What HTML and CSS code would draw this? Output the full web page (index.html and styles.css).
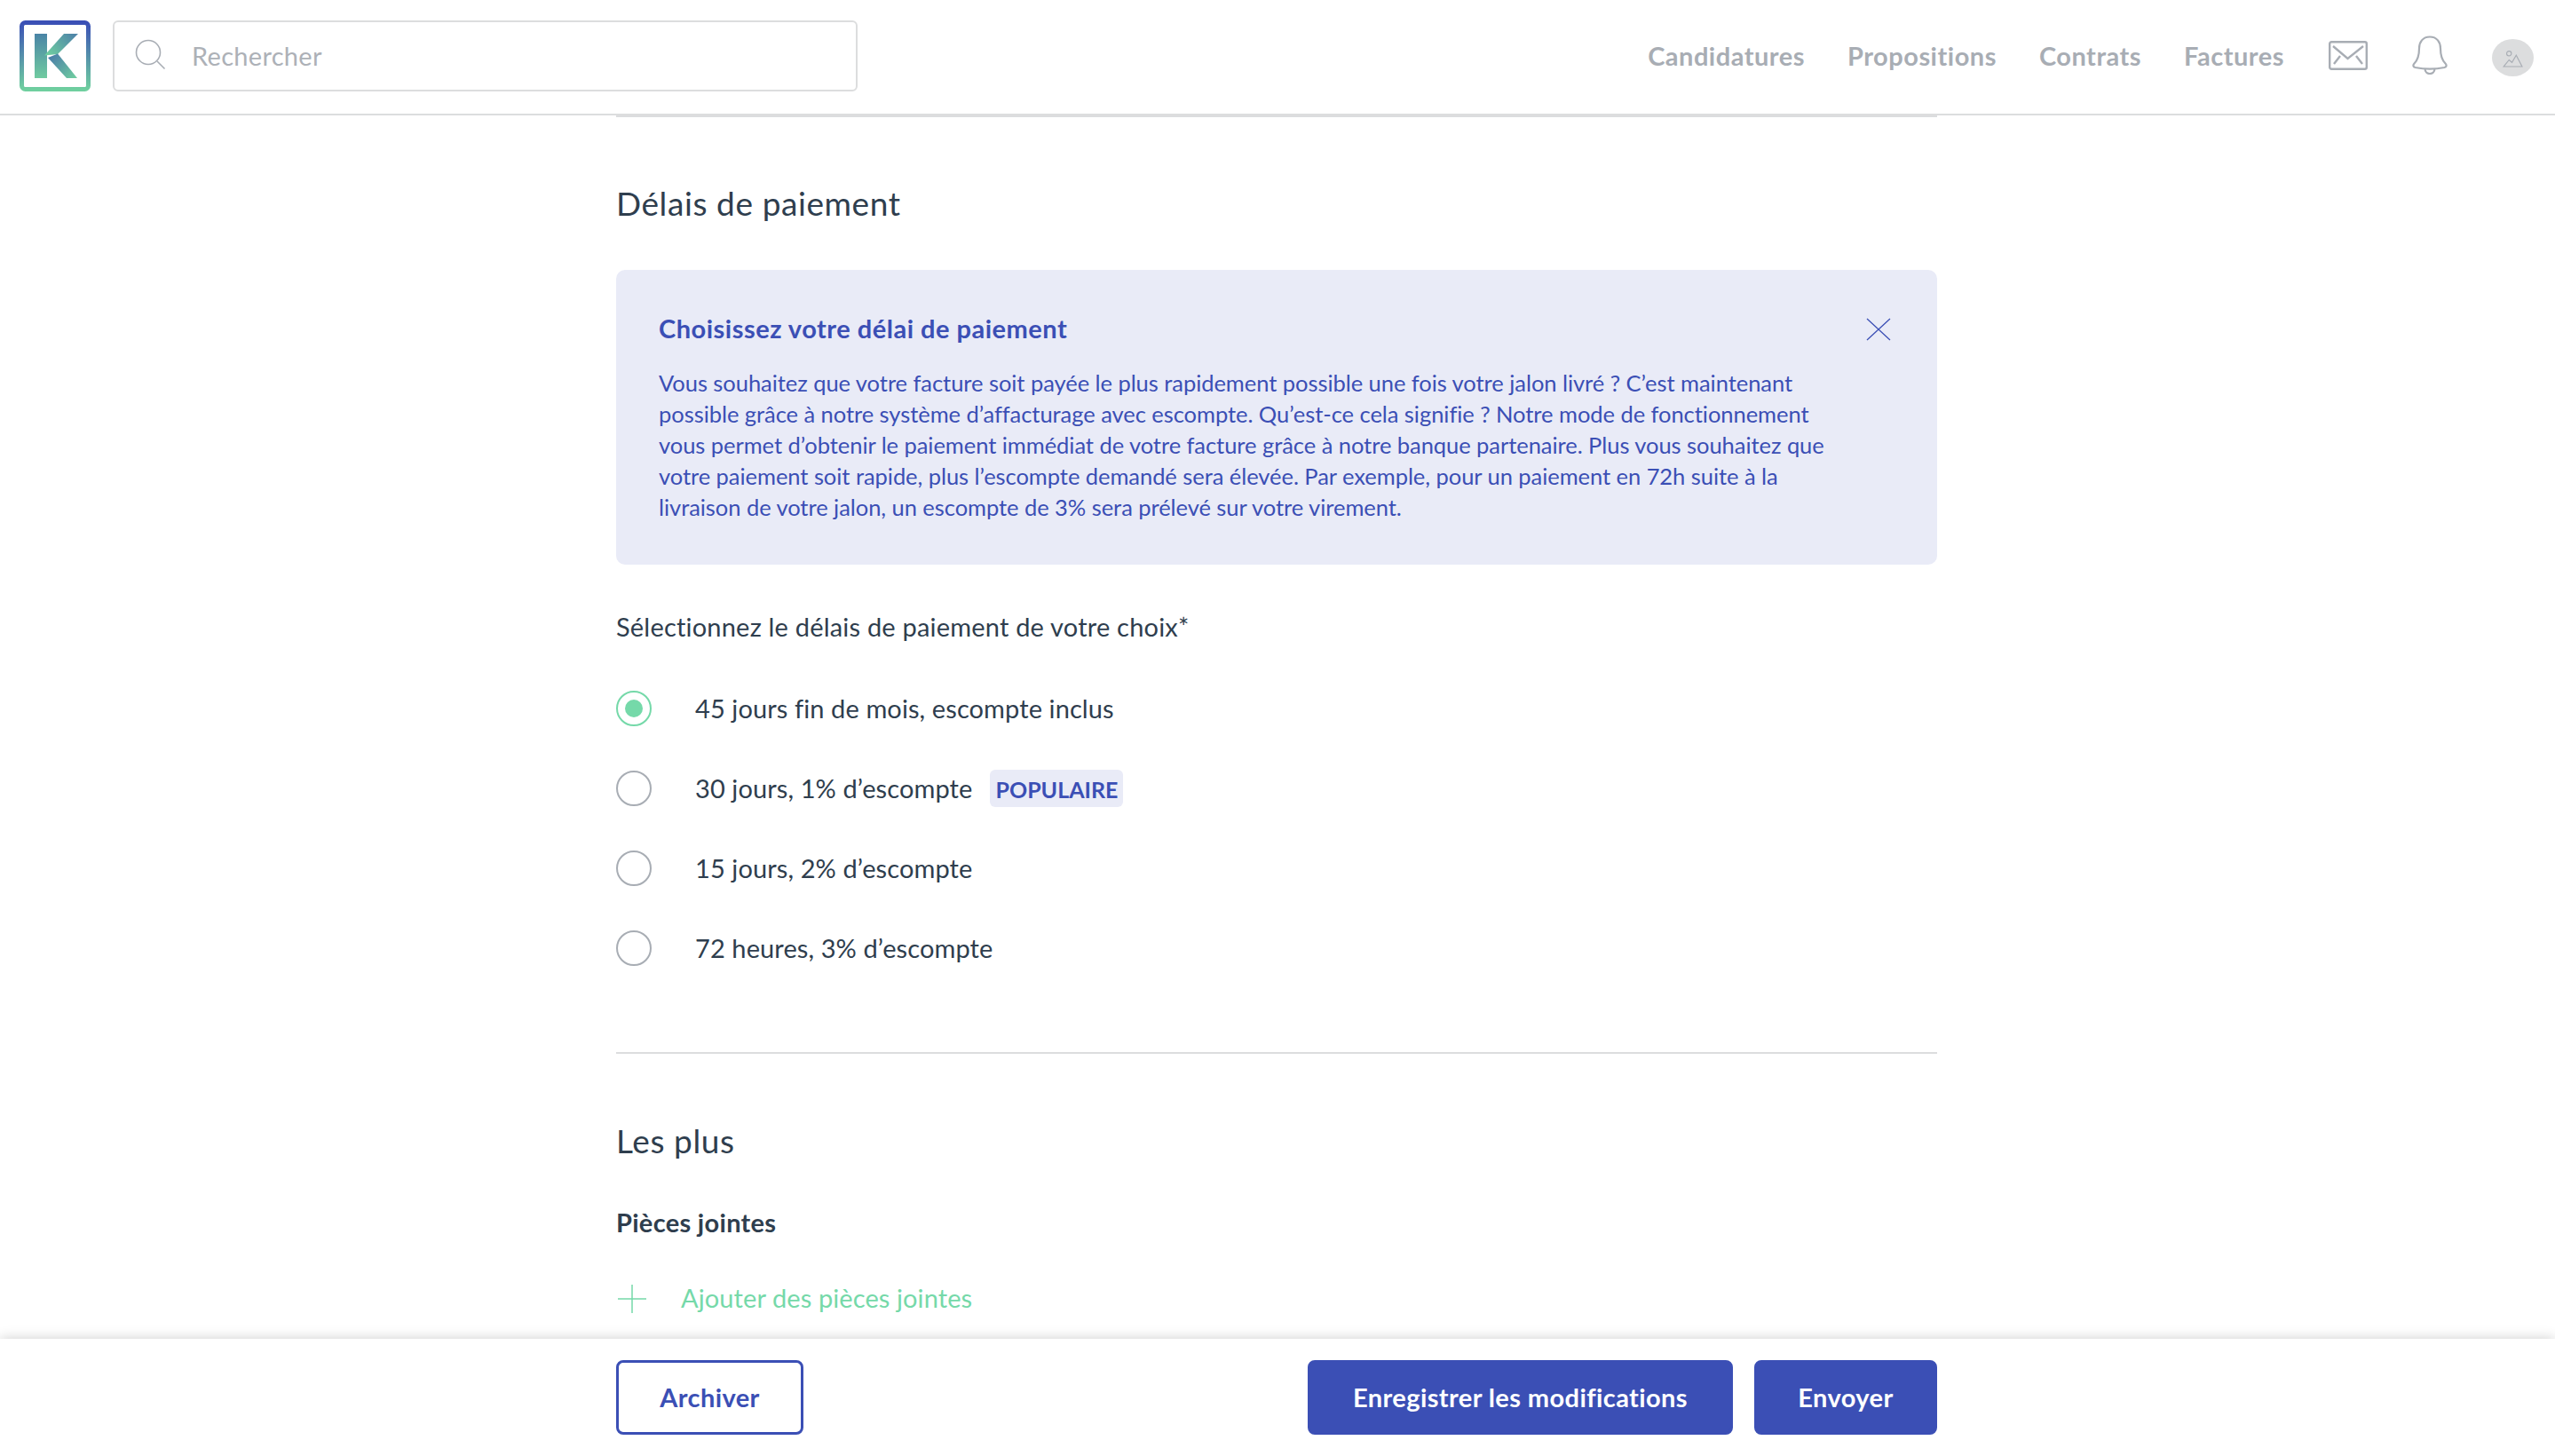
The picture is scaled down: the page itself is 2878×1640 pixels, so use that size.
FILE: index.html
```html
<!DOCTYPE html>
<html lang="fr">
<head>
<meta charset="utf-8">
<title>Délais de paiement</title>
<link rel="stylesheet" href="styles.css">
</head>
<body>
<header class="topbar">
  <svg class="logo" viewBox="0 0 80 80" aria-label="Logo">
    <defs>
      <linearGradient id="gf" x1="0" y1="0" x2="0" y2="1"><stop offset="0" stop-color="#3b50b6"/><stop offset="1" stop-color="#6fcf9f"/></linearGradient>
      <linearGradient id="gk" gradientUnits="userSpaceOnUse" x1="0" y1="15" x2="0" y2="65"><stop offset="0" stop-color="#4a84a6"/><stop offset="1" stop-color="#70cba0"/></linearGradient>
      <linearGradient id="ga" gradientUnits="userSpaceOnUse" x1="60" y1="15" x2="32" y2="40"><stop offset="0" stop-color="#4f86a8"/><stop offset="1" stop-color="#6fcfa0"/></linearGradient>
      <linearGradient id="gb" gradientUnits="userSpaceOnUse" x1="36" y1="40" x2="60" y2="65"><stop offset="0" stop-color="#4c7fa8"/><stop offset="1" stop-color="#6dc9a0"/></linearGradient>
    </defs>
    <rect x="2.500" y="2.500" width="75" height="75" rx="4" fill="none" stroke="url(#gf)" stroke-width="5"/>
    <rect x="17" y="15" width="14" height="50" fill="url(#gk)"/>
    <polygon points="28,39.500 50,15 66,15 43,38" fill="url(#ga)"/>
    <polygon points="32,42 43,37.500 65,65 53,65" fill="url(#gb)"/>
  </svg>
  <label class="search">
    <svg class="search-icon" viewBox="0 0 36 36"><circle cx="15" cy="15" r="13.500" fill="none" stroke="#a8adb4" stroke-width="1.600"/><path d="M25 25l8.500 8.500" fill="none" stroke="#a8adb4" stroke-width="1.600"/></svg>
    <span class="placeholder">Rechercher</span>
  </label>
  <nav class="nav">
    <div class="nav-links">
      <a class="nav-link">Candidatures</a>
      <a class="nav-link">Propositions</a>
      <a class="nav-link">Contrats</a>
      <a class="nav-link">Factures</a>
    </div>
    <svg class="mail" viewBox="0 0 44 33"><rect x="1.200" y="1.200" width="41.600" height="30.600" rx="2" fill="none" stroke="#a8adb4" stroke-width="2.400"/><path d="M5 6l16.500 14L39 6M6 26l7-9M38 26l-7-9" fill="none" stroke="#a8adb4" stroke-width="2.400"/></svg>
    <svg class="bell" viewBox="0 0 40 44"><path d="M20 1.500c-8 0-12 6-12 13 0 9-1.500 13-5.500 17-2 2-1 4 1 4.500 10 2 23 2 33 0 2-.5 3-2.500 1-4.500-4-4-5.500-8-5.500-17 0-7-4-13-12-13z" fill="none" stroke="#a8adb4" stroke-width="2.200"/><path d="M14.500 37c0 4 2.500 6 5.500 6s5.500-2 5.500-6" fill="none" stroke="#a8adb4" stroke-width="2.200"/></svg>
    <span class="avatar">
      <svg class="avatar-icon" viewBox="0 0 24 20"><circle cx="7.500" cy="3.500" r="2.800" fill="none" stroke="#a8adb4" stroke-width="1.200"/><path d="M1 19l6.500-8 3.500 3L16 5.500 23 19z" fill="none" stroke="#a8adb4" stroke-width="1.200"/></svg>
    </span>
  </nav>
</header>

<main class="main">
  <div class="column">
    <section class="section first">
      <h2 class="heading">Délais de paiement</h2>
      <div class="notice">
        <div class="notice-head">
          <h3 class="notice-title">Choisissez votre délai de paiement</h3>
          <svg class="close" viewBox="0 0 28 26"><path d="M1 1l26 24M27 1L1 25" fill="none" stroke="#3b4fb5" stroke-width="1.300"/></svg>
        </div>
        <p class="notice-text">Vous souhaitez que votre facture soit payée le plus rapidement possible une fois votre jalon livré ? C’est maintenant<br>possible grâce à notre système d’affacturage avec escompte. Qu’est-ce cela signifie ? Notre mode de fonctionnement<br>vous permet d’obtenir le paiement immédiat de votre facture grâce à notre banque partenaire. Plus vous souhaitez que<br>votre paiement soit rapide, plus l’escompte demandé sera élevée. Par exemple, pour un paiement en 72h suite à la<br>livraison de votre jalon, un escompte de 3% sera prélevé sur votre virement.</p>
      </div>
      <p class="question">Sélectionnez le délais de paiement de votre choix*</p>
      <div class="options">
        <div class="option"><span class="radio checked"></span><span class="option-text">45 jours fin de mois, escompte inclus</span></div>
        <div class="option"><span class="radio"></span><span class="option-text">30 jours, 1% d’escompte</span><span class="badge">POPULAIRE</span></div>
        <div class="option"><span class="radio"></span><span class="option-text">15 jours, 2% d’escompte</span></div>
        <div class="option"><span class="radio"></span><span class="option-text">72 heures, 3% d’escompte</span></div>
      </div>
    </section>
    <section class="section second">
      <h2 class="heading">Les plus</h2>
      <h4 class="subheading">Pièces jointes</h4>
      <a class="add">
        <svg class="plus" viewBox="0 0 32 32"><path d="M16 0v32M0 16h32" fill="none" stroke="#75d9a9" stroke-width="1.500"/></svg>
        <span class="add-text">Ajouter des pièces jointes</span>
      </a>
    </section>
  </div>
</main>

<footer class="footer">
  <div class="footer-inner">
    <button class="btn outline">Archiver</button>
    <div class="footer-right">
      <button class="btn solid save">Enregistrer les modifications</button>
      <button class="btn solid send">Envoyer</button>
    </div>
  </div>
</footer>
</body>
</html>
```
FILE: styles.css
```css
* { box-sizing: border-box; }
html, body { margin: 0; height: 100%; }
body {
  height: 1640px;
  overflow: hidden;
  display: flex;
  flex-direction: column;
  background: #fff;
  color: #2f3e4e;
  font-family: "Lato", "Liberation Sans", sans-serif;
}
.topbar {
  flex: none;
  height: 130px;
  display: flex;
  align-items: flex-start;
  padding: 23px 24px 0 22px;
  border-bottom: 2px solid #dcddde;
}
.logo { width: 80px; height: 80px; flex: none; }
.search {
  margin-left: 25px;
  width: 839px;
  flex: none;
  height: 80px;
  border: 2px solid #dcddde;
  border-radius: 6px;
  display: flex;
  align-items: center;
  padding-left: 25px;
}
.search-icon { width: 36px; height: 36px; margin-top: -2px; margin-left: -2px; }
.placeholder { margin-left: 28px; padding-bottom: 1px; font-size: 29px; color: #adb1b7; letter-spacing: .3px; }
.nav { margin-left: auto; display: flex; align-items: center; height: 80px; gap: 50px; }
.nav-links { display: flex; gap: 48px; }
.nav-link { padding-bottom: 2px; font-size: 29px; font-weight: 700; color: #a8adb4; letter-spacing: .5px; }
.mail { width: 44px; height: 33px; margin-top: -2px; }
.bell { width: 40px; height: 44px; margin-top: -2px; }
.avatar {
  width: 47px;
  height: 42px;
  border-radius: 50%;
  background: #dcddde;
  display: flex;
  align-items: center;
  justify-content: center;
  margin-top: 4px;
}
.avatar-icon { width: 23px; height: 19px; margin-top: 3px; }

.main { flex: 1; min-height: 0; overflow: hidden; }
.column { width: 1488px; margin-left: 694px; }
.section { border-top: 2px solid #dcddde; }
.first { padding-bottom: 97px; }
.heading { margin: 75px 0 53px; font-size: 37px; line-height: 44px; font-weight: 400; letter-spacing: .6px; }
.second .heading { margin: 76px 0 50px; }
.notice {
  height: 332px;
  padding: 46px 48px 0;
  background: #e9ebf7;
  border-radius: 10px;
  color: #3b4fb5;
}
.notice-head { display: flex; justify-content: space-between; align-items: center; height: 40px; padding-right: 4px; }
.notice-title { margin: 0; font-size: 29px; line-height: 40px; font-weight: 700; letter-spacing: .5px; }
.close { width: 28px; height: 26px; margin-top: 1px; }
.notice-text { margin: 24px 0 0; font-size: 25.500px; line-height: 34.900px; letter-spacing: -.05px; white-space: nowrap; }
.question { margin: 50px 0 52px; font-size: 29px; line-height: 40px; letter-spacing: .2px; }
.options { display: flex; flex-direction: column; gap: 50px; }
.option { display: flex; align-items: center; height: 40px; font-size: 29px; letter-spacing: .1px; }
.option-text { padding-bottom: 2px; }
.radio {
  flex: none;
  width: 40px;
  height: 40px;
  margin-right: 49px;
  border: 2px solid #a8adb4;
  border-radius: 50%;
  display: flex;
  align-items: center;
  justify-content: center;
}
.radio.checked { border-color: #75d9a9; }
.radio.checked::after { content: ""; width: 20px; height: 20px; border-radius: 50%; background: #75d9a9; }
.badge {
  margin-left: 20px;
  width: 150px;
  height: 42px;
  line-height: 44px;
  text-align: center;
  background: #e9ebf7;
  border-radius: 6px;
  color: #3b4fb5;
  font-size: 25px;
  font-weight: 700;
  letter-spacing: 0;
  white-space: nowrap;
}
.subheading { margin: 0 0 46px; font-size: 29px; line-height: 40px; font-weight: 700; letter-spacing: .3px; }
.add { display: flex; align-items: center; height: 40px; color: #75d9a9; font-size: 29px; letter-spacing: .1px; }
.add-text { padding-bottom: 3px; }
.plus { width: 32px; height: 32px; margin: 0 39px 0 2px; }

.footer {
  flex: none;
  height: 132px;
  background: #fff;
  box-shadow: 0 0 14px rgba(0, 0, 0, .2);
  position: relative;
}
.footer-inner { width: 1488px; height: 100%; margin-left: 694px; padding-top: 24px; display: flex; justify-content: space-between; }
.footer-right { display: flex; gap: 24px; }
.btn {
  height: 84px;
  border-radius: 8px;
  border: 3px solid #3b4fb5;
  font-family: inherit;
  font-size: 29px;
  font-weight: 700;
  letter-spacing: .4px;
  padding: 0 0 2px;
}
.outline { width: 211px; background: #fff; color: #3b4fb5; }
.solid { background: #3b4fb5; color: #fff; }
.save { width: 479px; }
.send { width: 206px; }
```
